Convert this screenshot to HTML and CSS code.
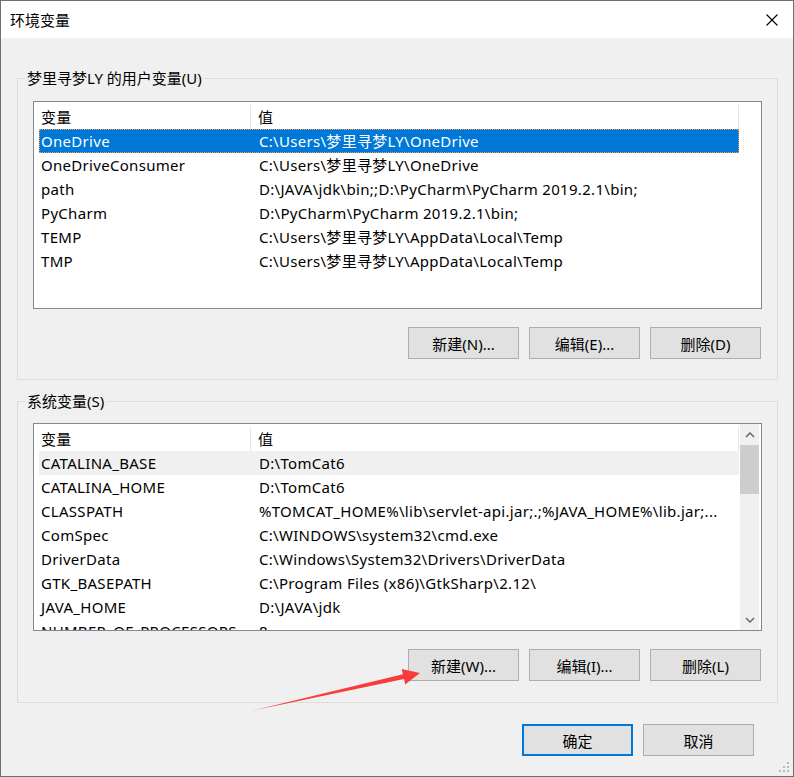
FILE: index.html
```html
<!DOCTYPE html>
<html lang="zh-CN">
<head>
    <meta charset="UTF-8">
    <title>环境变量</title>
    <link rel="stylesheet" href="styles.css">
</head>
<body>
<div class="window">
    <div class="titlebar">
        <span class="title">环境变量</span>
        <span class="close">
            <svg width="12" height="12" viewBox="0 0 12 12"><path d="M0.5 0.5L11.5 11.5M11.5 0.5L0.5 11.5" stroke="#000" stroke-width="1.1" fill="none"/></svg>
        </span>
    </div>
    <div class="content">
        <!-- 用户变量 -->
        <div class="group">
            <span class="group-title">梦里寻梦LY 的用户变量(U)</span>
            <div class="list">
                <div class="rows">
                    <div class="row head"><span class="c-name">变量</span><span class="c-val">值</span></div>
                    <div class="row selected"><span class="c-name">OneDrive</span><span class="c-val">C:\Users\梦里寻梦LY\OneDrive</span></div>
                    <div class="row"><span class="c-name">OneDriveConsumer</span><span class="c-val">C:\Users\梦里寻梦LY\OneDrive</span></div>
                    <div class="row"><span class="c-name">path</span><span class="c-val">D:\JAVA\jdk\bin;;D:\PyCharm\PyCharm 2019.2.1\bin;</span></div>
                    <div class="row"><span class="c-name">PyCharm</span><span class="c-val">D:\PyCharm\PyCharm 2019.2.1\bin;</span></div>
                    <div class="row"><span class="c-name">TEMP</span><span class="c-val">C:\Users\梦里寻梦LY\AppData\Local\Temp</span></div>
                    <div class="row"><span class="c-name">TMP</span><span class="c-val">C:\Users\梦里寻梦LY\AppData\Local\Temp</span></div>
                </div>
            </div>
            <div class="btns">
                <button class="btn">新建(N)...</button>
                <button class="btn">编辑(E)...</button>
                <button class="btn">删除(D)</button>
            </div>
        </div>

        <!-- 系统变量 -->
        <div class="group group-sys">
            <span class="group-title">系统变量(S)</span>
            <div class="list">
                <div class="rows">
                    <div class="row head"><span class="c-name">变量</span><span class="c-val">值</span></div>
                    <div class="row hover"><span class="c-name">CATALINA_BASE</span><span class="c-val">D:\TomCat6</span></div>
                    <div class="row"><span class="c-name">CATALINA_HOME</span><span class="c-val">D:\TomCat6</span></div>
                    <div class="row"><span class="c-name">CLASSPATH</span><span class="c-val">%TOMCAT_HOME%\lib\servlet-api.jar;.;%JAVA_HOME%\lib.jar;...</span></div>
                    <div class="row"><span class="c-name">ComSpec</span><span class="c-val">C:\WINDOWS\system32\cmd.exe</span></div>
                    <div class="row"><span class="c-name">DriverData</span><span class="c-val">C:\Windows\System32\Drivers\DriverData</span></div>
                    <div class="row"><span class="c-name">GTK_BASEPATH</span><span class="c-val">C:\Program Files (x86)\GtkSharp\2.12\</span></div>
                    <div class="row"><span class="c-name">JAVA_HOME</span><span class="c-val">D:\JAVA\jdk</span></div>
                    <div class="row"><span class="c-name">NUMBER_OF_PROCESSORS</span><span class="c-val">8</span></div>
                </div>
                <div class="scrollbar">
                    <span class="sb-arrow">
                        <svg width="10" height="6" viewBox="0 0 10 6"><path d="M1 5L5 1L9 5" stroke="#606060" stroke-width="1.4" fill="none"/></svg>
                    </span>
                    <span class="sb-thumb"></span>
                    <span class="sb-track"></span>
                    <span class="sb-arrow">
                        <svg width="10" height="6" viewBox="0 0 10 6"><path d="M1 1L5 5L9 1" stroke="#606060" stroke-width="1.4" fill="none"/></svg>
                    </span>
                </div>
            </div>
            <div class="btns">
                <button class="btn">新建(W)...</button>
                <button class="btn">编辑(I)...</button>
                <button class="btn">删除(L)</button>
            </div>
        </div>

        <div class="dlg-btns">
            <button class="btn primary">确定</button>
            <button class="btn">取消</button>
        </div>
    </div>

    <!-- 右下角拖拽点 -->
    <svg class="grip" width="14" height="12" viewBox="0 0 14 12">
        <rect x="10" y="0" width="2" height="2" fill="#b8b8b8"/>
        <rect x="6" y="4" width="2" height="2" fill="#b8b8b8"/>
        <rect x="10" y="4" width="2" height="2" fill="#b8b8b8"/>
        <rect x="2" y="8" width="2" height="2" fill="#b8b8b8"/>
        <rect x="6" y="8" width="2" height="2" fill="#b8b8b8"/>
        <rect x="10" y="8" width="2" height="2" fill="#b8b8b8"/>
    </svg>

    <!-- 红色标注箭头 -->
    <svg class="arrow" width="794" height="777" viewBox="0 0 794 777">
        <polygon points="251,711 402.9,674.3 401.6,668.9 420,673 405.2,684.5 404,679.1" fill="#f83c3c"/>
    </svg>
</div>
</body>
</html>
```

FILE: styles.css
```css
*{
    margin: 0;
    padding: 0;
    box-sizing: border-box;
}
html,body{
    width: 794px;
    height: 777px;
    overflow: hidden;
}
body{
    font-family: "Noto Sans", "Noto Sans CJK SC", sans-serif;
    font-size: 15px;
    color: #000;
}
.window{
    position: relative;
    width: 794px;
    height: 777px;
    border: 1px solid #707070;
    background: #f0f0f0;
    display: flex;
    flex-direction: column;
}
.titlebar{
    height: 37px;
    background: #fff;
    display: flex;
    align-items: center;
    justify-content: space-between;
    padding: 0 15px 0 9px;
}
.title{
    line-height: 20px;
}
.close{
    display: flex;
}
.content{
    flex: 1;
    padding: 40px 15px 0 16px;
}
.group{
    position: relative;
    border: 1px solid #dcdcdc;
    padding: 22px 15px 20px 15px;
}
.group-sys{
    margin-top: 21px;
    padding-top: 21px;
    padding-bottom: 21px;
}
.group-title{
    position: absolute;
    top: -11px;
    left: 7px;
    padding: 0 2px;
    line-height: 20px;
    background: #f0f0f0;
}
.list{
    height: 208px;
    border: 1px solid #828790;
    background: #fff;
    display: flex;
    overflow: hidden;
}
.rows{
    flex: 1;
    padding-left: 5px;
}
.row{
    width: 700px;
    height: 24px;
    line-height: 24px;
    display: flex;
    white-space: nowrap;
    letter-spacing: 0.3px;
}
.row .c-name{
    width: 212px;
    padding-left: 2px;
    overflow: hidden;
}
.row .c-val{
    flex: 1;
    padding-left: 8px;
    overflow: hidden;
}
.row.head{
    height: 27px;
    padding-top: 3px;
}
.row.head .c-name,
.row.head .c-val{
    border-right: 1px solid #e5e5e5;
}
.row.head .c-val{
    padding-left: 7px;
}
.row.selected{
    background: #0078d7;
    color: #fff;
    outline: 1px dotted #f0a050;
    outline-offset: -1px;
}
.row.hover{
    background: #f0f0f0;
}
.scrollbar{
    width: 19px;
    margin-right: 2px;
    background: #f0f0f0;
    display: flex;
    flex-direction: column;
}
.sb-arrow{
    height: 21px;
    display: flex;
    align-items: center;
    justify-content: center;
}
.sb-thumb{
    height: 49px;
    background: #cdcdcd;
}
.sb-track{
    flex: 1;
}
.btns{
    display: flex;
    justify-content: flex-end;
    gap: 10px;
    margin-top: 18px;
    padding-right: 1px;
}
.btn{
    width: 111px;
    height: 32px;
    border: 1px solid #adadad;
    background: #e1e1e1;
    font-family: inherit;
    font-size: 15px;
    color: #000;
}
.btn.primary{
    border: 2px solid #0078d7;
}
.dlg-btns{
    display: flex;
    justify-content: flex-end;
    gap: 10px;
    margin-top: 21px;
    padding-right: 24px;
}
.grip{
    position: absolute;
    right: 2px;
    bottom: 2px;
}
.arrow{
    position: absolute;
    left: -1px;
    top: -1px;
    pointer-events: none;
}
```
